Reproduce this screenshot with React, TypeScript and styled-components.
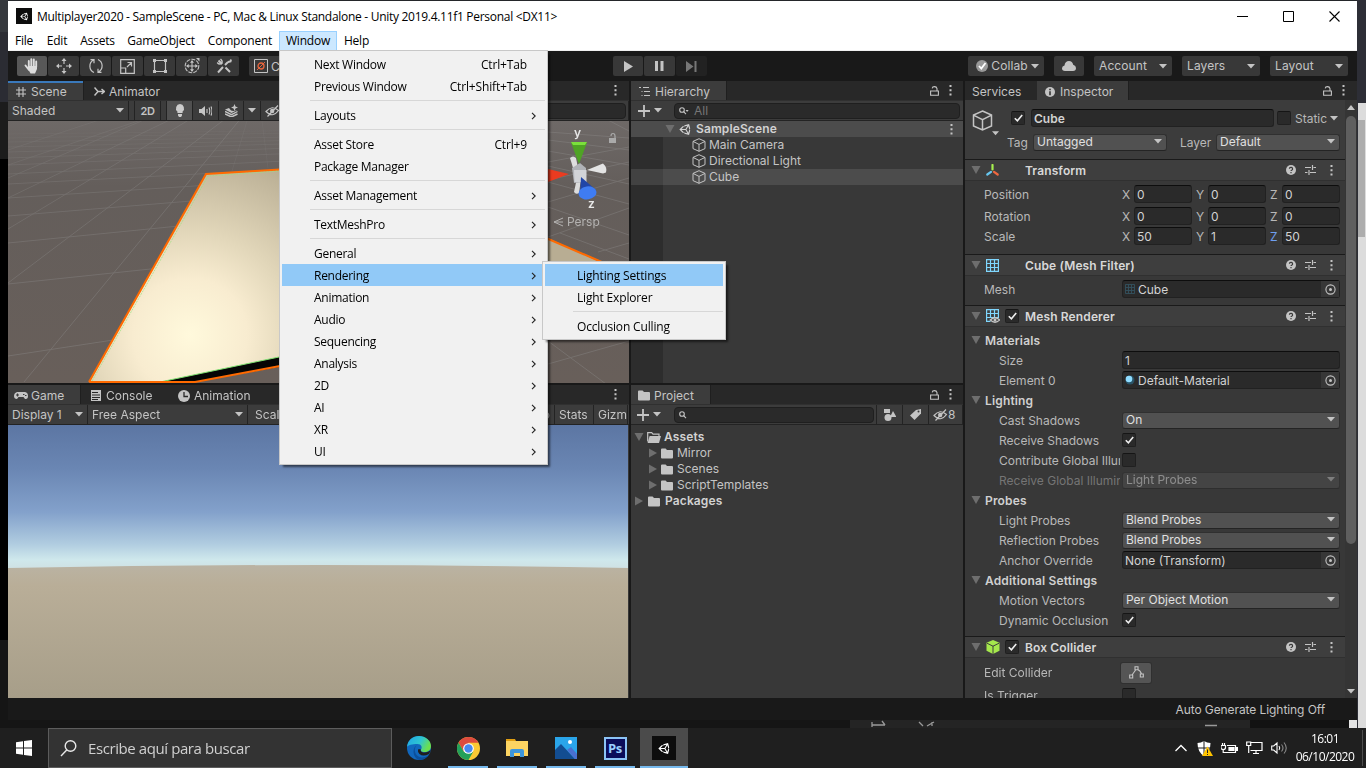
import React from "react";
import styled, { createGlobalStyle, css } from "styled-components";
import { FaUnity } from "react-icons/fa";

const Global = createGlobalStyle`
  * { box-sizing: border-box; }
  body { margin: 0; overflow: hidden; background: #000; }
  svg { display: block; flex: none; }
`;

const ui = css`
  font-family: Inter, "Liberation Sans", sans-serif;
  font-size: 12px;
  color: #c4c4c4;
`;
const segoe = css`
  font-family: "Open Sans", "Noto Sans", sans-serif;
  font-size: 12px;
  color: #000;
`;

/* ---------- desktop ---------- */
const Desktop = styled.div`
  position: relative;
  width: 1366px;
  height: 768px;
  display: flex;
  flex-direction: column;
  overflow: hidden;
  background: #141414;
`;
const Middle = styled.div`
  display: flex;
  height: 728px;
`;
const LeftEdge = styled.div`
  width: 8px;
  flex: none;
  background: linear-gradient(#35383d 0 32px, #2b2c33 32px 102px, #1c1c1c 102px 159px, #000 159px 640px, #151515 640px);
`;
const Center = styled.div`
  width: 1349px;
  flex: none;
  display: flex;
  flex-direction: column;
`;
const RightEdge = styled.div`
  width: 9px;
  flex: none;
  padding: 103px 0 0 1px;
  background: #2d2e36;
`;
const OuterScroll = styled.div`
  height: 625px;
  padding: 17px 1px 0 0;
  background: #dcdcdc;
`;
const OuterThumb = styled.div`
  height: 117px;
  background: #adadad;
`;
const AppWindow = styled.div`
  height: 720px;
  display: flex;
  flex-direction: column;
  border-top: 1px solid #24262a;
  background: #191919;
`;
const UnderWindow = styled.div`
  height: 8px;
  display: flex;
  background: #151515;
`;
const Under = styled.div<{ $w: number; $bg: string }>`
  width: ${(p) => p.$w}px;
  background: ${(p) => p.$bg};
`;

/* ---------- title + menu bar ---------- */
const TitleBar = styled.div`
  ${segoe}
  height: 30px;
  display: flex;
  align-items: center;
  padding-left: 8px;
  background: #fff;
`;
const TitleText = styled.span`
  width: 600px;
  margin-left: 5px;
  letter-spacing: -0.29px;
  white-space: nowrap;
`;
const AppTile = styled.div<{ $s: number }>`
  width: ${(p) => p.$s}px;
  height: ${(p) => p.$s}px;
  display: flex;
  align-items: center;
  justify-content: center;
  color: #fff;
  background: #0d0d0d;
`;
const Caption = styled.div`
  display: flex;
  gap: 35px;
  margin-left: auto;
  margin-right: 17px;
`;
const MenuBar = styled.div`
  ${segoe}
  height: 20px;
  display: flex;
  background: #fff;
  border-bottom: 1px solid #f0f0f0;
`;
const MenuBarItem = styled.div<{ $w: number; $on?: boolean }>`
  width: ${(p) => p.$w}px;
  height: 20px;
  line-height: 18px;
  text-align: center;
  letter-spacing: -0.2px;
  border: 1px solid ${(p) => (p.$on ? "#99d1ff" : "transparent")};
  background: ${(p) => (p.$on ? "#cce8ff" : "transparent")};
`;

/* ---------- popup menus ---------- */
const Popup = styled.div<{ $x: number; $y: number; $w: number; $h: number; $track: number }>`
  ${segoe}
  position: absolute;
  left: ${(p) => p.$x}px;
  top: ${(p) => p.$y}px;
  width: ${(p) => p.$w}px;
  height: ${(p) => p.$h}px;
  padding: 2px;
  letter-spacing: ${(p) => p.$track}px;
  background: #f1f1f1;
  border: 1px solid #c8c8c8;
  box-shadow: 3px 3px 2px -1px rgba(0, 0, 0, 0.55);
`;
const PopupItem = styled.div<{ $on?: boolean }>`
  height: 22px;
  display: flex;
  align-items: center;
  padding: 1px 8px 0 32px;
  line-height: 21px;
  white-space: nowrap;
  background: ${(p) => (p.$on ? "#91c9f7" : "transparent")};
`;
const Shortcut = styled.span`
  margin-left: auto;
  margin-right: 10px;
  letter-spacing: -0.15px;
`;
const PopupLine = styled.div`
  height: 1px;
  margin: 3px 0 3px 28px;
  background: #d7d7d7;
`;
const Push = styled.span`
  margin-left: auto;
`;

/* ---------- editor toolbar ---------- */
const Toolbar = styled.div`
  ${ui}
  height: 30px;
  display: flex;
  align-items: center;
  padding: 0 9px;
  letter-spacing: 0.1px;
  background: #191919;
`;
const ToolGroup = styled.div<{ $w?: number; $gap?: number }>`
  display: flex;
  gap: ${(p) => p.$gap ?? 1}px;
  width: ${(p) => (p.$w ? p.$w + "px" : "auto")};
`;
const ToolButton = styled.div<{ $w?: number; $tone?: string }>`
  width: ${(p) => p.$w ?? 31}px;
  height: 20px;
  display: flex;
  align-items: center;
  justify-content: center;
  background: ${(p) => p.$tone ?? "#383838"};
  border-radius: 2px;
`;
const ToolDrop = styled.div<{ $w: number; $pad?: number }>`
  width: ${(p) => p.$w}px;
  height: 20px;
  display: flex;
  align-items: center;
  justify-content: space-between;
  padding: 0 5px 0 ${(p) => p.$pad ?? 5}px;
  background: #383838;
  border-radius: 2px;
  line-height: 22px;
`;
const Pivot = styled(ToolButton)`
  justify-content: flex-start;
  padding-left: 5px;
  gap: 3px;
  margin-left: 9px;
`;

/* ---------- docking ---------- */
const Dock = styled.div`
  ${ui}
  height: 617px;
  display: flex;
  gap: 2px;
`;
const Column = styled.div<{ $w: number }>`
  width: ${(p) => p.$w}px;
  flex: none;
  display: flex;
  flex-direction: column;
  gap: 2px;
`;
const Panel = styled.div<{ $h: number }>`
  height: ${(p) => p.$h}px;
  display: flex;
  flex-direction: column;
  overflow: hidden;
  background: #383838;
`;
const TabBar = styled.div`
  height: 19px;
  flex: none;
  display: flex;
  background: #282828;
`;
const Tab = styled.div<{ $w: number; $on?: boolean; $focus?: boolean; $pad?: number; $gap?: number }>`
  width: ${(p) => p.$w}px;
  display: flex;
  align-items: center;
  gap: ${(p) => p.$gap ?? 4}px;
  padding: 2px 0 0 ${(p) => p.$pad ?? 8}px;
  background: ${(p) => (p.$on ? "#3c3c3c" : "transparent")};
  border-right: 1px solid ${(p) => (p.$on ? "#1f1f1f" : "transparent")};
  box-shadow: ${(p) => (p.$focus ? "inset 0 2px #3a79bb" : "none")};
  white-space: nowrap;
`;
const TabTools = styled.div<{ $r: number }>`
  display: flex;
  align-items: center;
  gap: 10px;
  margin-left: auto;
  padding-right: ${(p) => p.$r}px;
`;
const Strip = styled.div`
  height: 21px;
  flex: none;
  display: flex;
  align-items: center;
  background: #3c3c3c;
  border-top: 1px solid #303030;
  border-bottom: 1px solid #232323;
  white-space: nowrap;
`;
const Cell = styled.div<{ $w: number; $on?: boolean; $pad?: number; $mid?: boolean; $between?: boolean; $end?: boolean }>`
  width: ${(p) => p.$w}px;
  height: 19px;
  flex: none;
  overflow: hidden;
  display: flex;
  align-items: center;
  justify-content: ${(p) => (p.$mid ? "center" : p.$between ? "space-between" : p.$end ? "flex-end" : "flex-start")};
  padding: ${(p) => (p.$mid ? "0" : `0 4px 0 ${p.$pad ?? 4}px`)};
  border-right: 1px solid #232323;
  background: ${(p) => (p.$on ? "#505050" : "transparent")};
`;
const Divider = styled.div<{ $w: number }>`
  width: ${(p) => p.$w}px;
  height: 19px;
  flex: none;
  border-right: 1px solid #232323;
`;
const Small = styled.span`
  font-size: 11px;
  font-weight: 600;
  letter-spacing: -0.4px;
`;
const SearchBox = styled.div<{ $w: number }>`
  width: ${(p) => p.$w}px;
  height: 16px;
  flex: none;
  display: flex;
  align-items: center;
  gap: 5px;
  padding-left: 4px;
  color: #767676;
  background: #2a2a2a;
  border: 1px solid #1f1f1f;
  border-radius: 4px;
`;
const AddMenu = styled.div<{ $w: number; $pad: number }>`
  width: ${(p) => p.$w}px;
  display: flex;
  align-items: center;
  gap: 4px;
  padding-left: ${(p) => p.$pad}px;
`;

/* ---------- trees ---------- */
const Tree = styled.div<{ $pt?: number; $gutter?: boolean }>`
  flex: 1;
  padding-top: ${(p) => p.$pt ?? 0}px;
  background: ${(p) => (p.$gutter ? "linear-gradient(90deg, #2d2d2d 32px, #383838 32px)" : "#383838")};
`;
const TreeRow = styled.div<{ $pad: number; $on?: boolean; $bold?: boolean; $gap?: number }>`
  height: 16px;
  display: flex;
  align-items: center;
  gap: ${(p) => p.$gap ?? 4}px;
  padding: 0 10px 0 ${(p) => p.$pad}px;
  line-height: 16px;
  font-weight: ${(p) => (p.$bold ? 600 : 400)};
  letter-spacing: ${(p) => (p.$bold ? 0.12 : 0)}px;
  color: ${(p) => (p.$bold ? "#d2d2d2" : "#c4c4c4")};
  background: ${(p) => (p.$on ? "rgba(255,255,255,0.1)" : "transparent")};
`;

/* ---------- inspector ---------- */
const InspectorBody = styled.div`
  flex: 1;
  min-height: 0;
  display: flex;
`;
const InspectorList = styled.div`
  width: 380px;
  overflow: hidden;
`;
const ScrollTrack = styled.div`
  width: 12px;
  display: flex;
  flex-direction: column;
  align-items: center;
  background: #353535;
  padding: 5px 0 4px;
  gap: 6px;
`;
const ScrollThumb = styled.div`
  width: 10px;
  height: 431px;
  margin-bottom: 139px;
  background: #5f5f5f;
  border-radius: 5px;
`;
const ObjectHeader = styled.div`
  height: 59px;
  display: flex;
  background: #3c3c3c;
`;
const ObjectIcon = styled.div`
  width: 46px;
  padding: 10px 0 0 7px;
`;
const ArrowCorner = styled.div`
  display: flex;
  justify-content: flex-end;
  padding-right: 12px;
`;
const ObjectFields = styled.div`
  display: flex;
  flex-direction: column;
  gap: 6px;
  padding-top: 9px;
`;
const Line = styled.div`
  height: 18px;
  display: flex;
  align-items: center;
`;
const Check = styled.div`
  width: 14px;
  height: 14px;
  flex: none;
  display: flex;
  align-items: center;
  justify-content: center;
  background: #2a2a2a;
  border: 1px solid #202020;
  border-top-color: #151515;
  border-radius: 2px;
`;
const Field = styled.div<{ $w: number; $bold?: boolean; $ml?: number }>`
  width: ${(p) => p.$w}px;
  height: 18px;
  flex: none;
  display: flex;
  align-items: center;
  gap: 3px;
  margin-left: ${(p) => p.$ml ?? 0}px;
  padding-left: 2px;
  color: #d2d2d2;
  font-weight: ${(p) => (p.$bold ? 600 : 400)};
  line-height: 17px;
  background: #2a2a2a;
  border: 1px solid #212121;
  border-top-color: #0d0d0d;
  border-radius: 3px;
`;
const PickerButton = styled.div`
  width: 18px;
  height: 16px;
  margin-left: auto;
  display: flex;
  align-items: center;
  justify-content: center;
  background: #373737;
`;
const Select = styled.div<{ $w: number; $dim?: boolean; $ml?: number }>`
  width: ${(p) => p.$w}px;
  height: 17px;
  flex: none;
  display: flex;
  align-items: center;
  justify-content: space-between;
  margin-left: ${(p) => p.$ml ?? 0}px;
  padding: 0 4px 1px 3px;
  color: #e0e0e0;
  line-height: 14px;
  background: #515151;
  border: 1px solid #303030;
  border-bottom-color: #242424;
  border-radius: 3px;
  opacity: ${(p) => (p.$dim ? 0.5 : 1)};
`;
const Label = styled.span<{ $w?: number; $ml?: number; $tone?: string }>`
  width: ${(p) => (p.$w ? p.$w + "px" : "auto")};
  flex: none;
  margin-left: ${(p) => p.$ml ?? 0}px;
  padding-top: 1px;
  color: ${(p) => p.$tone ?? "#b8b8b8"};
  overflow: hidden;
  white-space: nowrap;
  line-height: 18px;
`;
const ComponentHeader = styled.div`
  height: 22px;
  display: flex;
  align-items: center;
  padding: 0 12px 0 6px;
  background: #3e3e3e;
  border-top: 1px solid #1a1a1a;
  border-bottom: 1px solid #303030;
  font-weight: 600;
  letter-spacing: 0.13px;
  color: #d8d8d8;
`;
const HeaderName = styled.span`
  padding-top: 1px;
`;
const HeaderIcons = styled.div`
  width: 39px;
  display: flex;
  justify-content: space-between;
  align-items: center;
  margin-left: 5px;
  padding-right: 6px;
`;
const HeaderTools = styled.div`
  display: flex;
  align-items: center;
  gap: 9px;
  margin-left: auto;
`;
const HeaderKebab = styled.div`
  margin-left: 5px;
`;
const Rows = styled.div<{ $pt: number; $h: number }>`
  height: ${(p) => p.$h}px;
  padding-top: ${(p) => p.$pt}px;
`;
const Row = styled.div<{ $pad: number; $h?: number; $bold?: boolean }>`
  height: ${(p) => p.$h ?? 20}px;
  display: flex;
  align-items: center;
  padding-left: ${(p) => p.$pad}px;
  font-weight: ${(p) => (p.$bold ? 600 : 400)};
`;
const FoldTitle = styled.span`
  margin-left: 4px;
  padding-top: 1px;
  letter-spacing: 0.16px;
  color: #d0d0d0;
`;
const Slot = styled.div<{ $ml: number }>`
  display: flex;
  margin-left: ${(p) => p.$ml}px;
`;
const EditButton = styled.div`
  width: 30px;
  height: 20px;
  display: flex;
  align-items: center;
  justify-content: center;
  background: #555;
  border-radius: 2px;
  box-shadow: 0 0 0 1px #303030;
`;
const StatusBar = styled.div`
  ${ui}
  height: 22px;
  padding-right: 32px;
  line-height: 24px;
  letter-spacing: -0.08px;
  text-align: right;
  background: #191919;
`;

/* ---------- taskbar ---------- */
const Taskbar = styled.div`
  height: 40px;
  display: flex;
  background: #1f1f1f;
`;
const Start = styled.div`
  width: 48px;
  display: flex;
  align-items: center;
  justify-content: center;
`;
const TaskSearch = styled.div`
  ${segoe}
  width: 344px;
  display: flex;
  align-items: center;
  gap: 11px;
  padding-left: 11px;
  margin-right: -2px;
  font-size: 15px;
  letter-spacing: -0.41px;
  color: #d0d0d0;
  background: #333;
  border: 1px solid #5c5c5c;
`;
const TaskApp = styled.div<{ $w?: number; $on?: boolean; $run?: boolean }>`
  width: ${(p) => p.$w ?? 40}px;
  margin-left: ${(p) => (p.$on ? 5 : 9)}px;
  display: flex;
  align-items: center;
  justify-content: center;
  background: ${(p) => (p.$on ? "#4b4b4b" : "transparent")};
  box-shadow: ${(p) => (p.$run ? "inset 0 -2px #76b9ed" : "none")};
`;
const PsTile = styled.div`
  width: 23px;
  height: 23px;
  border: 2px solid #8bc3f5;
  background: #0b0d5a;
  color: #9ad0ff;
  font: 700 13px/18px "Open Sans", sans-serif;
  letter-spacing: -0.3px;
  text-align: center;
`;
const Tray = styled.div`
  display: flex;
  align-items: center;
  gap: 8px;
  margin-left: auto;
`;
const Clock = styled.div`
  ${segoe}
  width: 75px;
  margin-left: -8px;
  margin-right: 3px;
  color: #fff;
  line-height: 18px;
  letter-spacing: -0.5px;
  text-align: center;
  border-right: 1px solid #4d4d4d;
`;

/* ---------- icons ---------- */
type IcoProps = { w?: number; h?: number; vb?: string; c?: string; s?: number; children: React.ReactNode };
const Ico = ({ w = 16, h = 16, vb, c = "#c4c4c4", s = 1.2, children }: IcoProps) => (
  <svg width={w} height={h} viewBox={vb ?? `0 0 ${w} ${h}`} fill="none" stroke={c} strokeWidth={s}>
    {children}
  </svg>
);
const Down = ({ w = 8 }: { w?: number }) => (
  <svg width={w} height={5} viewBox="0 0 8 5"><path d="M0 0h8L4 4.6z" fill="#c4c4c4" /></svg>
);
const Fold = () => <svg width="10" height="8" viewBox="0 0 10 8"><path d="M.5 0h9L5 8z" fill="#6e6e6e" /></svg>;
const FoldClosed = () => <svg width="8" height="10" viewBox="0 0 8 10"><path d="M0 .5v9L8 5z" fill="#6e6e6e" /></svg>;
const Kebab = () => (
  <svg width="3" height="11" viewBox="0 0 3 11"><path d="M.5 0h2v2h-2zM.5 4.2h2v2h-2zM.5 8.4h2v2h-2z" fill="#c4c4c4" /></svg>
);
const Lock = () => (
  <Ico w={9} h={10} s={1.1}><path d="M.6 5h7.800v4.200H.6zM2.200 2.400Q2.400.6 4.500.6T7 2.600V5" /></Ico>
);
const CubeIcon = ({ size = 14 }: { size?: number }) => (
  <Ico w={size} h={size} vb="0 0 14 14" s={1}><path d="M7 .7l6 2.7v7.2l-6 2.700-6-2.700V3.4zM1 3.400l6 3 6-3M7 6.400v6.900" /></Ico>
);
const Tick = () => <Ico w={9} h={8} c="#eee" s={1.6}><path d="M.8 4.200l2.600 2.600L8.200 1" /></Ico>;
const Picker = () => (
  <Ico w={11} h={11} s={1.1}><circle cx="5.5" cy="5.5" r="4.600" /><circle cx="5.5" cy="5.5" r="1.500" fill="#c4c4c4" stroke="none" /></Ico>
);
const Help = () => (
  <svg width="10" height="10" viewBox="0 0 10 10"><circle cx="5" cy="5" r="5" fill="#c4c4c4" /><path d="M3.4 3.800a1.600 1.500 0 1 1 2.300 1.400Q5 5.500 5 6.100M5 7v1.200" fill="none" stroke="#3a3a3a" strokeWidth="1.200" /></svg>
);
const Preset = () => <Ico w={11} h={10}><path d="M0 2.500h6M8.500 2.500H11M7.500 0v5M0 7.500h2.500M5 7.500H11M4 5v5" /></Ico>;
const Plus = () => <Ico w={12} h={12} s={1.8}><path d="M6 0v12M0 6h12" /></Ico>;
const Folder = () => <svg width="12" height="11" viewBox="0 0 12 11"><path d="M1 .5h3.600l1.400 1.500H11q1 0 1 1V9.500q0 1-1 1H1q-1 0-1-1V1.500q0-1 1-1z" fill="#c4c4c4" /></svg>;
const FolderOpen = () => (
  <svg width="14" height="11" viewBox="0 0 14 11"><path d="M.7 9.500V.7h4L6 2.200h6V4" fill="none" stroke="#c4c4c4" strokeWidth="1.200" /><path d="M2.600 4H14l-2 7H.6z" fill="#c4c4c4" /></svg>
);
const Search = ({ drop }: { drop?: boolean }) => (
  <Ico w={10} h={8} s={1.1}><circle cx="3" cy="3" r="2.300" /><path d="M4.700 4.700L7 7.200" />{drop && <path d="M6.500 3h3.200L8.100 5z" fill="#c4c4c4" stroke="none" />}</Ico>
);
const Eye = () => (
  <Ico w={15} h={12} s={1.2}><path d="M1 6.500q6-7 12.500-1-6 8-12.500 1zM13 .5L2.500 11.500" /><circle cx="7.200" cy="6" r="2.200" fill="#c4c4c4" stroke="none" /></Ico>
);
const MeshIcon = ({ size = 13, eye, dim }: { size?: number; eye?: boolean; dim?: boolean }) => (
  <svg width={size + (eye ? 1 : 0)} height={size + (eye ? 1 : 0)} viewBox={eye ? "0 0 14 14" : "0 0 13 13"} fill="none">
    <path d="M.6.600h11.800v11.800H.6zM4.500.6v11.800M8.500.6v11.800M.6 4.500h11.800M.6 8.500h11.800" stroke={dim ? "#34525f" : "#7fd6fd"} strokeWidth="1.200" />
    {eye && <><path d="M3.500 9h10.500v5H5z" fill="#3e3e3e" /><path d="M4.300 11q4.700-4.500 9.400 0-4.700 4.500-9.400 0z" fill="#3e3e3e" stroke="#c4c4c4" strokeWidth="1.200" /><circle cx="9" cy="11" r="1.500" fill="#c4c4c4" /></>}
  </svg>
);
const Chevron = () => <Ico w={6} h={8} c="#222" s={1.1}><path d="M1 .8L4.200 4 1 7.200" /></Ico>;

/* ---------- scene drawing ---------- */
const shallow = [[356, 330], [284, 266], [243, 226], [216, 202], [198, 187], [184, 175], [174, 166], [165, 158], [158, 152], [152, 147], [147, 143], [142, 139], [138, 135], [134, 132]];
const steep = [
  [24, 382, 330, 10], [8, 283, 290, 70], [8, 229, 260, 77], [8, 198, 240, 86], [8, 178, 200, 96],
  [8, 165, 200, 100], [8, 150, 160, 100], [232, 171, 247, 121], [268, 168, 262, 121],
];
const SceneView = () => (
  <svg width="621" height="262" viewBox="8 121 621 262">
    <defs>
      <linearGradient id="ground" x1="0" y1="0" x2="0" y2="1"><stop offset="0" stopColor="#6e6967" /><stop offset=".25" stopColor="#645e5b" /><stop offset="1" stopColor="#685f5a" /></linearGradient>
      <radialGradient id="slab" gradientUnits="userSpaceOnUse" cx="190" cy="335" r="190"><stop offset="0" stopColor="#fff9dc" /><stop offset=".3" stopColor="#f8ecd0" /><stop offset=".55" stopColor="#e1d6b9" /><stop offset="1" stopColor="#b8ad93" /></radialGradient>
    </defs>
    <rect x="8" y="121" width="621" height="262" fill="url(#ground)" />
    <g stroke="#8b8988" strokeWidth="1" opacity=".42">
      {shallow.map(([a, b], i) => <path key={i} d={`M8 ${a}L179 ${b}L350 ${b * 2 - a}`} fill="none" opacity={1 - i * 0.055} />)}
      {steep.map(([a, b, c, d], i) => <path key={i} d={`M${a} ${b}L${c} ${d}`} opacity={1 - i * 0.08} />)}
      <path d="M548 364L629 341M548 341l58 43M548 207l81 28M548 182l81 22M548 166l81 18M548 151l81 14M548 140l81 10M548 132l81 6M548 237l81-29M548 202l81-24M548 180l81-18M548 162l81-15M598 252l31-9M560 233l69 26M608 120l21 11" />
    </g>
    <path d="M90 381L206 174L430 160L548 238L602 263L548 310L279 365L195 382z" fill="url(#slab)" />
    <path d="M160 382l119-25v10l-84 15z" fill="#050505" />
    <path d="M160 382l119-25" stroke="#7fe070" fill="none" />
    <path d="M89 382h106l85-16M89 382L206 174l74-4.500M546 238l58 25" stroke="#ff6a00" strokeWidth="2" fill="none" />
    <path d="M92 381L208 176l72-5" stroke="#9be07c" strokeWidth=".7" strokeDasharray="2 1" fill="none" />
    {/* orientation gizmo */}
    <path d="M570 158q3-3 6 0l2 10-4 3z" fill="#dedede" />
    <path d="M577 178l-3 14q2 3 5 1l2-14z" fill="#dcdcdc" />
    <path d="M572 168l8-5 6 5v14l-12 1z" fill="#b0b2b7" />
    <path d="M574 170h12.500v12h-12z" fill="#d2d4d8" />
    <path d="M587 170l16-6.500q4.500 4 3 9l-3 1z" fill="#e4e4e4" />
    <path d="M571 142.500h16L579 164z" fill="#4fa325" />
    <path d="M571 142h16l-2 3h-12z" fill="#7be03c" />
    <path d="M548 169l21 5-21 8z" fill="#ea3b20" />
    <path d="M581 177l15 13-16 6z" fill="#2146a8" />
    <ellipse cx="587.500" cy="193" rx="9" ry="6.500" fill="#3f7cf2" transform="rotate(-8 587 193)" />
    <g fill="#e8e8e8" fontFamily="Inter" fontSize="12" fontWeight="600"><text x="574" y="137">y</text><text x="588" y="208">z</text></g>
    <text x="567" y="226" fill="#b4b2b1" fontFamily="Inter" fontSize="12">Persp</text>
    <path d="M563 218l-9 4 9 4M554 222h9" stroke="#b4b2b1" fill="none" />
    <path d="M609 138h7v5h-7z" fill="#aaa" />
    <path d="M611 136q0-2.500 2-2.500t2 2.500v3" stroke="#aaa" strokeWidth="1.200" fill="none" />
  </svg>
);
const GameView = () => (
  <svg width="620" height="273" viewBox="0 0 620 273">
    <defs>
      <linearGradient id="sky" x1="0" y1="0" x2="0" y2="1"><stop offset="0" stopColor="#5c76a3" /><stop offset=".3" stopColor="#6a86b3" /><stop offset=".6" stopColor="#83a1cb" /><stop offset=".82" stopColor="#b0cce0" /><stop offset=".93" stopColor="#cfe8ec" /><stop offset="1" stopColor="#cfe0e2" /></linearGradient>
      <linearGradient id="land" x1="0" y1="0" x2="0" y2="1"><stop offset="0" stopColor="#bab3a3" /><stop offset=".15" stopColor="#b9ae98" /><stop offset="1" stopColor="#a79e89" /></linearGradient>
    </defs>
    <rect width="620" height="145" fill="url(#sky)" />
    <path d="M0 143Q310 137 620 143V273H0z" fill="url(#land)" />
  </svg>
);

/* ---------- pieces ---------- */
const ComponentTitle = ({ icon, name, check }: { icon: React.ReactNode; name: string; check?: boolean }) => (
  <ComponentHeader>
    <Fold />
    <HeaderIcons>{icon}{check && <Check><Tick /></Check>}</HeaderIcons>
    <HeaderName>{name}</HeaderName>
    <HeaderTools><Help /><Preset /><HeaderKebab><Kebab /></HeaderKebab></HeaderTools>
  </ComponentHeader>
);
const Vec = ({ name, v, active, h }: { name: string; v: string[]; active?: boolean; h?: number }) => (
  <Row $pad={19} $h={h}>
    <Label $w={138}>{name}</Label>
    {["X", "Y", "Z"].map((a, i) => (
      <React.Fragment key={a}>
        <Label $w={12} $ml={i ? 4 : 0} $tone={active && i === 2 ? "#6f9ff0" : undefined}>{a}</Label>
        <Field $w={58}>{v[i]}</Field>
      </React.Fragment>
    ))}
  </Row>
);
const Prop = ({ name, dim, children }: { name: string; dim?: boolean; children: React.ReactNode }) => (
  <Row $pad={34}><Label $w={121} $tone={dim ? "#757575" : undefined}>{name}</Label><Slot $ml={2}>{children}</Slot></Row>
);
const Section = ({ name }: { name: string }) => <Row $pad={6} $bold><Fold /><FoldTitle>{name}</FoldTitle></Row>;
const Drop = ({ v, dim }: { v: string; dim?: boolean }) => <Select $w={218} $dim={dim}>{v}<Down /></Select>;

const menu: [string, string?][] = [
  ["Next Window", "Ctrl+Tab"], ["Previous Window", "Ctrl+Shift+Tab"], ["-"], ["Layouts", ">"], ["-"],
  ["Asset Store", "Ctrl+9"], ["Package Manager"], ["-"], ["Asset Management", ">"], ["-"], ["TextMeshPro", ">"], ["-"],
  ["General", ">"], ["Rendering", ">"], ["Animation", ">"], ["Audio", ">"], ["Sequencing", ">"], ["Analysis", ">"],
  ["2D", ">"], ["AI", ">"], ["XR", ">"], ["UI", ">"],
];

export default function App() {
  return (
    <Desktop>
      <Global />
      <Middle>
        <LeftEdge />
        <Center>
          <AppWindow>
            <TitleBar>
              <AppTile $s={16}><FaUnity size={9} /></AppTile>
              <TitleText>Multiplayer2020 - SampleScene - PC, Mac &amp; Linux Standalone - Unity 2019.4.11f1 Personal &lt;DX11&gt;</TitleText>
              <Caption>
                <Ico w={11} h={11} c="#000" s={1}><path d="M0 5.500h11" /></Ico>
                <Ico w={11} h={11} c="#000" s={1}><path d="M.5.500h10v10H.500z" /></Ico>
                <Ico w={11} h={11} c="#000" s={1.1}><path d="M.5.500l10 10M10.500.500l-10 10" /></Ico>
              </Caption>
            </TitleBar>
            <MenuBar>
              <MenuBarItem $w={32}>File</MenuBarItem>
              <MenuBarItem $w={34}>Edit</MenuBarItem>
              <MenuBarItem $w={47}>Assets</MenuBarItem>
              <MenuBarItem $w={80}>GameObject</MenuBarItem>
              <MenuBarItem $w={78}>Component</MenuBarItem>
              <MenuBarItem $w={58} $on>Window</MenuBarItem>
              <MenuBarItem $w={39}>Help</MenuBarItem>
            </MenuBar>
            <Toolbar>
              <ToolGroup $w={596}>
                <ToolButton $w={30} $tone="#585858"><Ico s={1.9} c="#ddd"><path d="M4.800 9V3M7.300 8V1.200M9.800 8V1.500M12.200 9V3.500M1.500 7.500L5 12" strokeLinecap="round" /><path d="M4 8h9v3l-2 4.500H6.500L4 11z" fill="#ddd" stroke="none" /></Ico></ToolButton>
                <ToolButton><Ico><path d="M8 1v5M8 10v5M1 8h5M10 8h5" /><path d="M8 0l2.500 3h-5zM8 16l2.500-3h-5zM0 8l3-2.500v5zM16 8l-3-2.500v5z" fill="#c4c4c4" stroke="none" /></Ico></ToolButton>
                <ToolButton><Ico><path d="M6 14.500A7 7 0 0 1 5.500 2M2.500 1.700h3.500v3.500M10 1.500a7 7 0 0 1 .5 12.500M13.500 14.300H10v-3.500" /></Ico></ToolButton>
                <ToolButton><Ico w={15} h={15}><path d="M.7.700h13.600v13.600H.700zM.700 9h5v5M7 8l4.500-4.500M7.500 3.500h4v4" /></Ico></ToolButton>
                <ToolButton><Ico><path d="M2.500 2.500h11v11h-11z" /><path d="M1 1h3v3H1zM12 1h3v3h-3zM1 12h3v3H1zM12 12h3v3h-3z" fill="#c4c4c4" stroke="none" /></Ico></ToolButton>
                <ToolButton><Ico s={1.1}><circle cx="8" cy="8" r="6.800" strokeDasharray="4 1.200" /><path d="M8 3v10M3 8h10" /><path d="M8 2l2 2.700H6zM8 14l-2-2.700h4zM2 8l2.700-2v4zM14 8l-2.700-2v4zM12 0h3.500v3.500z" fill="#c4c4c4" stroke="none" /></Ico></ToolButton>
                <ToolButton><Ico s={2}><path d="M2 14.500l5-5.500M9 7l3-3M12 4l2.500-.5L15 1.500M6 6L2.500 2.500M9.500 9.500L14 14" /><path d="M1.200 4.500q2 2.500 4.500 1Q7 3 4.500 1" strokeWidth="1.400" /></Ico></ToolButton>
                <Pivot $w={70}><Ico w={14} h={14} s={1}><path d="M.5.500h13v13H.500z" /><circle cx="7" cy="7" r="3" stroke="#e8643c" strokeWidth="1.300" /><path d="M3 11l8-8" stroke="#e8643c" /></Ico>Center</Pivot>
              </ToolGroup>
              <ToolGroup>
                <ToolButton $w={30}><svg width="9" height="11"><path d="M0 0l9 5.500L0 11z" fill="#c4c4c4" /></svg></ToolButton>
                <ToolButton><svg width="9" height="10"><path d="M0 0h3v10H0zM5.500 0h3v10h-3z" fill="#c4c4c4" /></svg></ToolButton>
                <ToolButton $tone="#222"><svg width="11" height="11"><path d="M0 0l7.500 5.500L0 11zM8.500 0h2v11h-2z" fill="#777" /></svg></ToolButton>
              </ToolGroup>
              <Push />
              <ToolGroup $gap={10}>
                <ToolDrop $w={76} $pad={8}><svg width="12" height="12" viewBox="0 0 12 12"><circle cx="6" cy="6" r="6" fill="#999" /><path d="M3 6l2.300 2.500L9.500 3" fill="none" stroke="#fff" strokeWidth="1.800" /></svg>Collab<Down /></ToolDrop>
                <ToolButton $w={30}><svg width="14" height="10" viewBox="0 0 14 10"><path d="M3 10Q0 9.800 0 7.200 0 5 2.500 4.500 3 0 7 0q3.500 0 4.200 3.800Q14 4.500 14 7q0 3-3 3z" fill="#c4c4c4" /></svg></ToolButton>
                <ToolDrop $w={78}>Account<Down /></ToolDrop>
                <ToolDrop $w={78}>Layers<Down /></ToolDrop>
                <ToolDrop $w={78}>Layout<Down /></ToolDrop>
              </ToolGroup>
            </Toolbar>
            <Dock>
              <Column $w={621}>
                <Panel $h={302}>
                  <TabBar>
                    <Tab $w={76} $on $focus $gap={5}><Ico w={10} h={10} s={1.1}><path d="M3 0v10M7 0v10M0 3h10M0 7h10" /></Ico>Scene</Tab>
                    <Tab $w={100} $pad={10}><Ico w={11} h={9} s={1.500}><path d="M.5.500L4 4.500.5 8.500M4 4.500h6M7.500 2l3 2.500-3 2.500" /></Ico>Animator</Tab>
                    <TabTools $r={12}><Kebab /></TabTools>
                  </TabBar>
                  <Strip>
                    <Cell $w={121} $between>Shaded<Down /></Cell>
                    <Divider $w={6} />
                    <Cell $w={26} $mid><Small>2D</Small></Cell>
                    <Divider $w={6} />
                    <Cell $w={26} $on $mid><svg width="10" height="13" viewBox="0 0 10 13"><path d="M5 0a4.300 4.300 0 0 1 2.600 7.500V9H2.400V7.500A4.300 4.300 0 0 1 5 0zM3 10h4v1.500L6 13H4l-1-1.500z" fill="#ccc" /></svg></Cell>
                    <Cell $w={26} $mid><Ico w={13} h={10} s={1.1}><path d="M0 3h2.500L6 0v10L2.500 7H0z" fill="#c4c4c4" stroke="none" /><path d="M8 3v4M10 1.500q1.500 3.500 0 7M12 .5q2 4.500 0 9" /></Ico></Cell>
                    <Cell $w={25} $mid><Ico w={13} h={13} s={1.4}><path d="M0 7.500l6.500 3.200L12.500 7.500M0 10l6.500 3 6-3" /><path d="M0 5.500L4 4l2 2.500 2.500.5 4-1-6 3z" fill="#c4c4c4" stroke="none" /><path d="M9.500 0l1 2.500 2.500 1-2.500 1-1 2.500-1-2.500L6 3.500l2.500-1z" fill="#c4c4c4" stroke="none" /></Ico></Cell>
                    <Cell $w={17} $mid><Down /></Cell>
                    <Cell $w={60}><Eye /></Cell>
                    <Push /><SearchBox $w={150} /><Divider $w={3} />
                  </Strip>
                  <SceneView />
                </Panel>
                <Panel $h={313}>
                  <TabBar>
                    <Tab $w={73} $on $pad={6} $gap={3}><svg width="14" height="9" viewBox="0 0 14 9"><path d="M3 1h8q3 .5 3 4t-3 3L9.500 6h-5L3 8Q0 8 0 5t3-4z" fill="#c4c4c4" /><path d="M2 4h3M3.500 2.500v3M9 3.500h1.500M11 4.500h1.500" stroke="#3c3c3c" strokeWidth="1.100" /></svg>Game</Tab>
                    <Tab $w={87} $pad={10} $gap={5}><Ico w={10} h={11} s={1}><path d="M0 0h10v11H0z" fill="#c4c4c4" stroke="none" /><path d="M1 2.500h6M1 5h8M1 7.500h8M1 9.500h6" stroke="#282828" /></Ico>Console</Tab>
                    <Tab $w={110} $pad={10} $gap={4}><svg width="12" height="12" viewBox="0 0 12 12"><circle cx="6" cy="6" r="6" fill="#c4c4c4" /><path d="M6 2v4.500h4" fill="none" stroke="#282828" strokeWidth="1.300" /></svg>Animation</Tab>
                    <TabTools $r={12}><Kebab /></TabTools>
                  </TabBar>
                  <Strip>
                    <Cell $w={80} $between>Display 1<Down /></Cell>
                    <Cell $w={160} $between>Free Aspect<Down /></Cell>
                    <Cell $w={100} $pad={7}>Scale</Cell>
                    <Cell $w={207} $end>Mute Audio</Cell>
                    <Cell $w={39}>Stats</Cell>
                    <Cell $w={34}>Gizmos</Cell>
                  </Strip>
                  <GameView />
                </Panel>
              </Column>
              <Column $w={332}>
                <Panel $h={302}>
                  <TabBar>
                    <Tab $w={96} $on $gap={5}><Ico w={11} h={9} s={1}><path d="M0 .5h2M4 .5h6M2.500 4.500h1M5 4.500h6M2.500 8.500h1M5 8.500h6" /></Ico>Hierarchy</Tab>
                    <TabTools $r={11}><Lock /><Kebab /></TabTools>
                  </TabBar>
                  <Strip>
                    <AddMenu $w={43} $pad={7}><Plus /><Down /></AddMenu>
                    <SearchBox $w={286}><Search drop />All</SearchBox>
                  </Strip>
                  <TreeRow $pad={34} $on $bold><Fold /><FaUnity size={13} />SampleScene<Push /><Kebab /></TreeRow>
                  <Tree $gutter>
                    <TreeRow $pad={61} $gap={3}><CubeIcon />Main Camera</TreeRow>
                    <TreeRow $pad={61} $gap={3}><CubeIcon />Directional Light</TreeRow>
                    <TreeRow $pad={61} $gap={3} $on><CubeIcon />Cube</TreeRow>
                  </Tree>
                </Panel>
                <Panel $h={313}>
                  <TabBar>
                    <Tab $w={80} $on $pad={7}><Folder />Project</Tab>
                    <TabTools $r={11}><Lock /><Kebab /></TabTools>
                  </TabBar>
                  <Strip>
                    <AddMenu $w={44} $pad={6}><Plus /><Down /></AddMenu>
                    <SearchBox $w={200}><Search /></SearchBox>
                    <Divider $w={3} />
                    <Cell $w={26} $mid><svg width="12" height="12" viewBox="0 0 12 12"><path d="M0 0h6v4H0zM6 8l3-6 3.500 6z" fill="#c4c4c4" /><circle cx="4" cy="8.500" r="3.500" fill="#c4c4c4" /></svg></Cell>
                    <Cell $w={26} $mid><svg width="11" height="11" viewBox="0 0 11 11"><path d="M6 1l5-1v4.500L4.500 11 0 6.500z" fill="#c4c4c4" /><circle cx="8.500" cy="2.500" r="1" fill="#3c3c3c" /></svg></Cell>
                    <Cell $w={34}><Eye />8</Cell>
                  </Strip>
                  <Tree $pt={4}>
                    <TreeRow $pad={3} $bold $gap={3}><Fold /><FolderOpen />Assets</TreeRow>
                    <TreeRow $pad={18}><FoldClosed /><Folder />Mirror</TreeRow>
                    <TreeRow $pad={18}><FoldClosed /><Folder />Scenes</TreeRow>
                    <TreeRow $pad={18}><FoldClosed /><Folder />ScriptTemplates</TreeRow>
                    <TreeRow $pad={4} $bold $gap={5}><FoldClosed /><Folder />Packages</TreeRow>
                  </Tree>
                </Panel>
              </Column>
              <Panel $h={617}>
                <TabBar>
                  <Tab $w={72} $pad={7}>Services</Tab>
                  <Tab $w={92} $on $gap={5}><svg width="10" height="10" viewBox="0 0 10 10"><circle cx="5" cy="5" r="5" fill="#c4c4c4" /><path d="M5 1.700v1.600M5 4.300v4" stroke="#3c3c3c" strokeWidth="1.700" /></svg>Inspector</Tab>
                  <TabTools $r={12}><Lock /><Kebab /></TabTools>
                </TabBar>
                <InspectorBody>
                  <InspectorList>
                    <ObjectHeader>
                      <ObjectIcon><CubeIcon size={21} /><ArrowCorner><Down w={7} /></ArrowCorner></ObjectIcon>
                      <ObjectFields>
                        <Line><Check><Tick /></Check><Field $w={243} $bold $ml={6}>Cube</Field><Slot $ml={3}><Check /></Slot><Label $ml={4}>Static</Label><Slot $ml={3}><Down /></Slot></Line>
                        <Line><Label $w={24} $ml={-4}>Tag</Label><Select $w={134} $ml={2}>Untagged<Down /></Select><Label $w={34} $ml={13}>Layer</Label><Select $w={124} $ml={2}>Default<Down /></Select></Line>
                      </ObjectFields>
                    </ObjectHeader>
                    <ComponentTitle name="Transform" icon={<svg width="13" height="12" viewBox="0 0 13 12"><path d="M6.500 1v4.500" stroke="#a6ef4f" strokeWidth="2.200" strokeLinecap="round" /><path d="M5 7.800L1.300 10.500" stroke="#66c6ef" strokeWidth="2.200" strokeLinecap="round" /><path d="M8 7.800l3.700 2.700" stroke="#ef6840" strokeWidth="2.200" strokeLinecap="round" /></svg>} />
                    <Rows $h={73} $pt={2}>
                      <Vec name="Position" v={["0", "0", "0"]} h={22} />
                      <Vec name="Rotation" v={["0", "0", "0"]} h={22} />
                      <Vec name="Scale" v={["50", "1", "50"]} active h={18} />
                    </Rows>
                    <ComponentTitle name="Cube (Mesh Filter)" icon={<MeshIcon />} />
                    <Rows $h={29} $pt={3}>
                      <Row $pad={19}><Label $w={138}>Mesh</Label><Field $w={218}><MeshIcon size={10} dim />Cube<PickerButton><Picker /></PickerButton></Field></Row>
                    </Rows>
                    <ComponentTitle name="Mesh Renderer" check icon={<MeshIcon eye />} />
                    <Rows $h={309} $pt={3}>
                      <Section name="Materials" />
                      <Prop name="Size"><Field $w={218}>1</Field></Prop>
                      <Prop name="Element 0"><Field $w={218}><svg width="10" height="10" viewBox="0 0 10 10"><circle cx="5" cy="5" r="4.500" fill="#2a5468" /><circle cx="4" cy="4" r="3.300" fill="#8fdcff" /></svg>Default-Material<PickerButton><Picker /></PickerButton></Field></Prop>
                      <Section name="Lighting" />
                      <Prop name="Cast Shadows"><Drop v="On" /></Prop>
                      <Prop name="Receive Shadows"><Check><Tick /></Check></Prop>
                      <Prop name="Contribute Global Illumination"><Check /></Prop>
                      <Prop name="Receive Global Illumination" dim><Drop v="Light Probes" dim /></Prop>
                      <Section name="Probes" />
                      <Prop name="Light Probes"><Drop v="Blend Probes" /></Prop>
                      <Prop name="Reflection Probes"><Drop v="Blend Probes" /></Prop>
                      <Prop name="Anchor Override"><Field $w={218}>None (Transform)<PickerButton><Picker /></PickerButton></Field></Prop>
                      <Section name="Additional Settings" />
                      <Prop name="Motion Vectors"><Drop v="Per Object Motion" /></Prop>
                      <Prop name="Dynamic Occlusion"><Check><Tick /></Check></Prop>
                    </Rows>
                    <ComponentTitle name="Box Collider" check icon={<svg width="14" height="14" viewBox="0 0 14 14"><path d="M7 0l6.500 2.800v8L7 14 .5 10.800v-8z" fill="#a5e84c" /><path d="M1 3.200l6 3 6-3M7 6v8" fill="none" stroke="#3e3e3e" /></svg>} />
                    <Rows $h={60} $pt={3}>
                      <Row $pad={19} $h={23}><Label $w={137}>Edit Collider</Label><EditButton><Ico w={15} h={13} s={1.1}><path d="M.7 9h3v3h-3zM11.300 8h3v3h-3zM6 .7h3v3H6zM3 9l4-5.500M8.500 3.500q3 1 4 4.500" /></Ico></EditButton></Row>
                      <Row $pad={19} $h={22}><Label $w={138}>Is Trigger</Label><Check /></Row>
                    </Rows>
                  </InspectorList>
                  <ScrollTrack><svg width="8" height="5"><path d="M0 5h8L4 0z" fill="#c4c4c4" /></svg><ScrollThumb /><Down /></ScrollTrack>
                </InspectorBody>
              </Panel>
            </Dock>
            <StatusBar>Auto Generate Lighting Off</StatusBar>
          </AppWindow>
          <UnderWindow>
            <Under $w={842} $bg="#151515" />
            <Under $w={400} $bg="#242424"><Ico w={390} h={8} c="#999" s={1.3}><path d="M22 5h13M32 1l3 4M22 2v5M69 2l4 4M77 6l7-4M82 2v4M355 5.500h12" /></Ico></Under>
            <Under $w={99} $bg="#121212" />
            <Under $w={8} $bg="#e4e4e4" />
          </UnderWindow>
        </Center>
        <RightEdge><OuterScroll><OuterThumb /></OuterScroll></RightEdge>
      </Middle>
      <Taskbar>
        <Start><svg width="16" height="16" viewBox="0 0 16 16"><path d="M0 2.200l7-1v6.300H0zM8 1.100L16 0v7.500H8zM0 8.500h7v6.300l-7-1zM8 8.500h8V16l-8-1.100z" fill="#fff" /></svg></Start>
        <TaskSearch><Ico w={17} h={17} c="#e8e8e8" s={1.4}><circle cx="10.500" cy="6" r="5.300" /><path d="M6.700 10L1 16" /></Ico>Escribe aquí para buscar</TaskSearch>
        <TaskApp>
          <svg width="24" height="24" viewBox="0 0 24 24">
            <defs><linearGradient id="edge" x1="0" y1="0" x2="1" y2=".4"><stop offset="0" stopColor="#1fa3e8" /><stop offset=".6" stopColor="#2fc6d0" /><stop offset="1" stopColor="#6be04e" /></linearGradient></defs>
            <circle cx="12" cy="12" r="12" fill="#1167bd" />
            <path d="M0 11C.5 4.500 5.500 0 12 0s12 4.500 12 10c0 4-3 6-6.500 6-3 0-4.500-1-3.500-2.500 1.500-2 .5-5.500-3.500-5.500C5 8 1 9 0 11z" fill="url(#edge)" />
            <path d="M9.500 9.500C6 13 8 21 15 21.500q3.500 0 6-2Q18 24 12 24 7 22 6.500 16q0-5 3-6.500z" fill="#0b4f9c" />
            <path d="M14 13.500c-1 1.500.5 3 3.500 3 2.500 0 4.500-1 6.500-2.500L22 18q-6 3-9.500 0-2.500-2.500-1-5z" fill="#1f1f1f" />
          </svg>
        </TaskApp>
        <TaskApp $run>
          <svg width="23" height="23" viewBox="0 0 24 24">
            <circle cx="12" cy="12" r="12" fill="#fbc934" /><path d="M12 12V6h10.400A12 12 0 0 0 1.600 6L7 15z" fill="#dd4b3e" /><path d="M1.600 6a12 12 0 0 0 10.400 18L17 15l-5 2-5-2z" fill="#22a05a" /><circle cx="12" cy="12" r="5.600" fill="#fff" /><circle cx="12" cy="12" r="4.400" fill="#4788f0" />
          </svg>
        </TaskApp>
        <TaskApp $run><svg width="22" height="20" viewBox="0 0 22 20"><path d="M0 1h9l1 2H0z" fill="#e09e12" /><path d="M0 3h22v15H0z" fill="#fcd462" /><path d="M4 19v-6q0-2 2-2h10q2 0 2 2v6h-4v-4H8v4z" fill="#3d96dc" /></svg></TaskApp>
        <TaskApp $run><svg width="22" height="22" viewBox="0 0 22 22"><path d="M0 0h22v22H0z" fill="#2aa5ea" /><path d="M0 13l6-6 14 15H0z" fill="#134d91" /><path d="M12 13l4-3 6 7v5h-2z" fill="#4a6fd0" /><circle cx="15" cy="5" r="2" fill="#fff" /></svg></TaskApp>
        <TaskApp $run><PsTile>Ps</PsTile></TaskApp>
        <TaskApp $w={48} $on $run><AppTile $s={24}><FaUnity size={13} /></AppTile></TaskApp>
        <Tray>
          <Ico w={14} h={8} c="#fff" s={1.3}><path d="M1.500 7L7 1.500 12.500 7" /></Ico>
          <svg width="17" height="17" viewBox="0 0 17 17"><path d="M8 1q3 2 6.500 2 0 9-6.500 13-6.500-4-6.500-13Q5 3 8 1z" fill="#fff" /><path d="M8 1v15M2 8h12" stroke="#1f1f1f" /><path d="M11.500 6.500L17 16H6z" fill="#ffc400" /><path d="M11.500 9.500v3.500M11.500 14v1" stroke="#222" /></svg>
          <Ico w={17} h={13} c="#fff" s={1.2}><path d="M6 3.500h8.500v7H6M0 3.500h4.500v2q0 2-2.200 2-2.300 0-2.300-2zM1.500 1v2.500M3.500 1v2.500M2.200 7.500v3H6" /><path d="M15 5.500h1.500v3H15M8 5.500h5v3H8z" fill="#fff" /></Ico>
          <Ico w={17} h={14} c="#fff" s={1.2}><path d="M5 1.500h11v8H4.500M.7 1h4v3.500h-4zM2.700 4.500V12M7 12.500h6M10 9.500v3" /></Ico>
          <Ico w={17} h={14} c="#fff" s={1.1}><path d="M.7 5h2L6 2v10L2.700 9h-2zM8 5q1.500 2 0 4" /><path d="M10.500 3.500q3 3.500 0 7M13 1.500q4.500 5.500 0 11" stroke="#888" /></Ico>
          <Clock>16:01<br />06/10/2020</Clock>
        </Tray>
      </Taskbar>

      <Popup $x={279} $y={50} $w={269} $h={415} $track={-0.27}>
        {menu.map(([t, r], i) => t === "-" ? <PopupLine key={i} /> : (
          <PopupItem key={i} $on={t === "Rendering"}>{t}{r === ">" ? <><Push /><Chevron /></> : r && <Shortcut>{r}</Shortcut>}</PopupItem>
        ))}
      </Popup>
      <Popup $x={542} $y={261} $w={184} $h={79} $track={-0.16}>
        <PopupItem $on>Lighting Settings</PopupItem>
        <PopupItem>Light Explorer</PopupItem>
        <PopupLine />
        <PopupItem>Occlusion Culling</PopupItem>
      </Popup>
    </Desktop>
  );
}
